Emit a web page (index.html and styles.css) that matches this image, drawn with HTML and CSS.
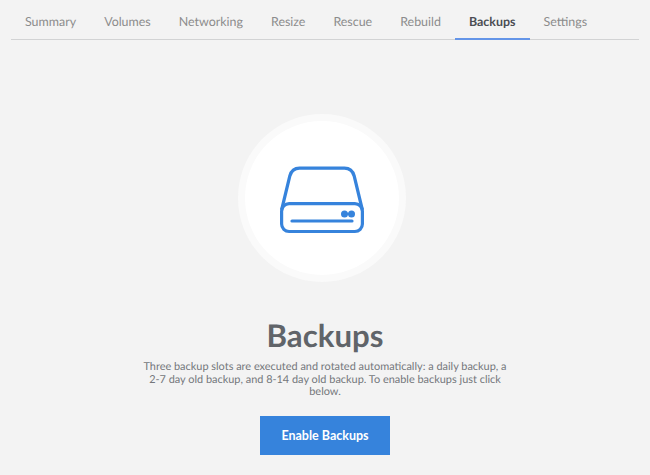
FILE: index.html
```html
<!DOCTYPE html>
<html lang="en">
<head>
<meta charset="utf-8">
<title>Backups</title>
<link rel="stylesheet" href="styles.css">
</head>
<body>
<nav class="tabs">
<a class="tab">Summary</a><a class="tab">Volumes</a><a class="tab">Networking</a><a class="tab">Resize</a><a class="tab">Rescue</a><a class="tab">Rebuild</a><a class="tab active">Backups</a><a class="tab">Settings</a>
</nav>
<main class="placeholder">
<div class="circle">
<svg class="drive" width="84" height="68" viewBox="0 0 84 68" fill="none" stroke="#3683dc" stroke-width="3.200">
<path d="M1.600 44 9.800 10Q12 2.200 19.500 2.200H64.500Q72 2.200 74.200 10L82.400 44"/>
<rect x="1.600" y="37.700" width="80.800" height="27.800" rx="7.500"/>
<path d="M12 55H72" stroke-linecap="round"/>
<path d="M64.500 48H71.500" stroke-width="1.500"/>
<circle cx="64.500" cy="48" r="3.500" fill="#3683dc" stroke="none"/>
<circle cx="71.500" cy="48" r="3.500" fill="#3683dc" stroke="none"/>
</svg>
</div>
<h1>Backups</h1>
<p>Three backup slots are executed and rotated automatically: a daily backup, a<br>2-7 day old backup, and 8-14 day old backup. To enable backups just click<br>below.</p>
<button>Enable Backups</button>
</main>
</body>
</html>
```
FILE: styles.css
```css
body {
  margin: 0;
  background: #f3f3f3;
  font-family: Lato, sans-serif;
  color: #606469;
  text-rendering: geometricPrecision;
}
.tabs {
  display: flex;
  box-sizing: border-box;
  height: 40px;
  margin: 0 11px;
  border-bottom: 1px solid #d2d3d4;
}
.tab {
  box-sizing: border-box;
  height: 40px;
  padding: 13px 14px 0;
  font-size: 12.45px;
  line-height: 17px;
  color: #8c8c8c;
}
.active {
  font-weight: 700;
  color: #4b4e53;
  border-bottom: 2px solid #6495e8;
}
.placeholder {
  display: flex;
  flex-direction: column;
  align-items: center;
  padding-top: 74px;
}
.circle {
  box-sizing: border-box;
  width: 168px;
  height: 168px;
  margin-right: 6px;
  display: flex;
  align-items: center;
  justify-content: center;
  border: 7px solid #fafafa;
  border-radius: 50%;
  background: #fff;
}
.drive {
  margin-top: 4px;
}
h1 {
  margin: 33px 0 0;
  font-size: 31.2px;
  line-height: 40px;
}
p {
  margin: 6px 0 0;
  font-size: 10.93px;
  line-height: 12.5px;
  text-align: center;
  color: #74777b;
}
button {
  width: 130px;
  height: 39px;
  margin-top: 17px;
  padding: 0;
  border: 0;
  background: #3683dc;
  color: #fff;
  font: 700 12.5px Lato, sans-serif;
}
```
